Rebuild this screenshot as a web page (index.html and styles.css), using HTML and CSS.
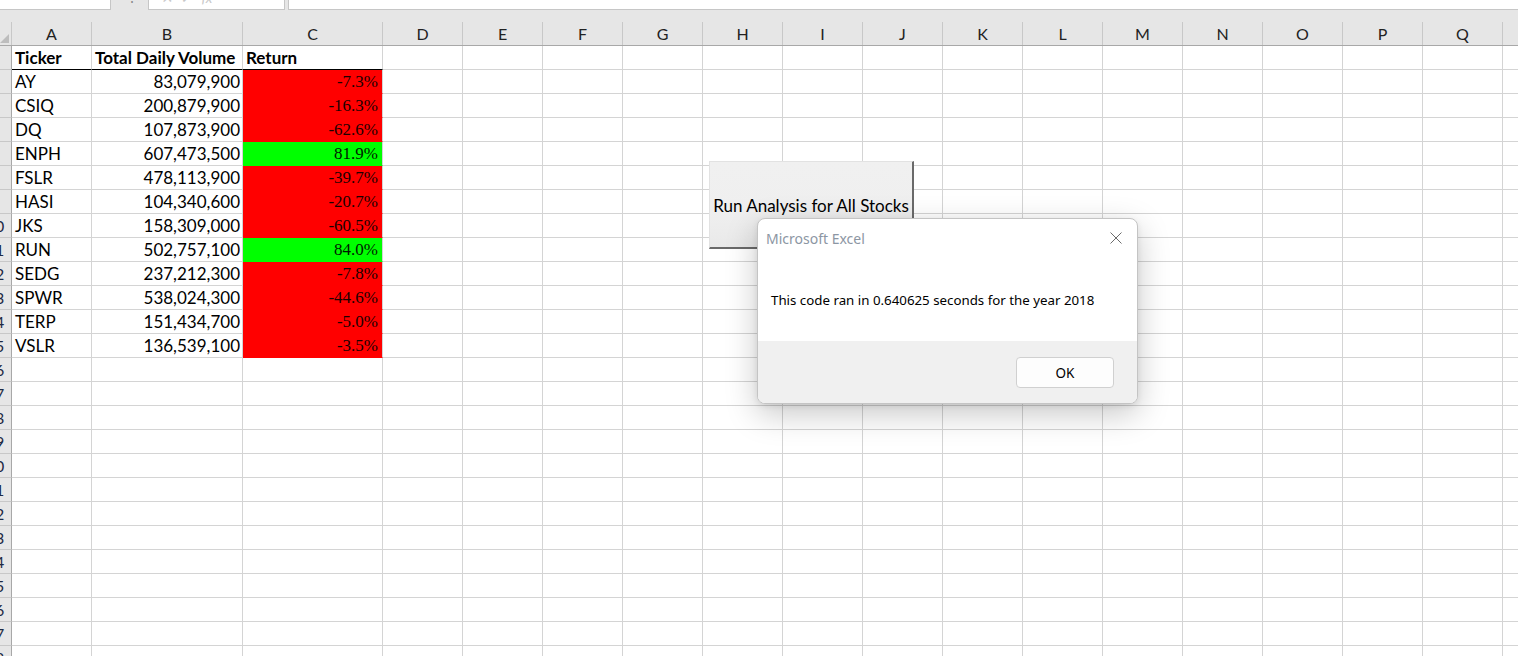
FILE: index.html
```html
<!DOCTYPE html>
<html>
<head>
<meta charset="utf-8">
<link rel="stylesheet" href="styles.css">
</head>
<body>
<div class="app">
  <div class="formula-bar">
    <div class="namebox"></div>
    <div class="fb-gap"><span class="fb-dots">⋮</span></div>
    <div class="fx-box"><span class="fx-glyphs">✕ &nbsp;✓ &nbsp;&nbsp;fx</span></div>
    <div class="fb-spacer"></div>
    <div class="formula-input"></div>
  </div>
  <div class="hdr-gap"></div>
  <div class="col-headers">
    <div class="corner"><div class="tri"></div></div>
    <div class="ch w-a">A</div>
    <div class="ch w-b">B</div>
    <div class="ch w-c">C</div>
    <div class="ch">D</div><div class="ch">E</div><div class="ch">F</div><div class="ch">G</div>
    <div class="ch">H</div><div class="ch">I</div><div class="ch">J</div><div class="ch">K</div>
    <div class="ch">L</div><div class="ch">M</div><div class="ch">N</div><div class="ch">O</div>
    <div class="ch">P</div><div class="ch">Q</div><div class="ch ch-last"></div>
  </div>
  <div class="sheet">
    <div class="row"><div class="rh"><span>3</span></div><div class="c w-a b hb">Ticker</div><div class="c w-b b hb">Total Daily Volume</div><div class="c w-c b hb">Return</div><div class="rest"></div></div>
    <div class="row"><div class="rh"><span>4</span></div><div class="c w-a">AY</div><div class="c w-b num">83,079,900</div><div class="c w-c ret red">-7.3%</div><div class="rest"></div></div>
    <div class="row"><div class="rh"><span>5</span></div><div class="c w-a">CSIQ</div><div class="c w-b num">200,879,900</div><div class="c w-c ret red">-16.3%</div><div class="rest"></div></div>
    <div class="row"><div class="rh"><span>6</span></div><div class="c w-a">DQ</div><div class="c w-b num">107,873,900</div><div class="c w-c ret red">-62.6%</div><div class="rest"></div></div>
    <div class="row"><div class="rh"><span>7</span></div><div class="c w-a">ENPH</div><div class="c w-b num">607,473,500</div><div class="c w-c ret green">81.9%</div><div class="rest"></div></div>
    <div class="row"><div class="rh"><span>8</span></div><div class="c w-a">FSLR</div><div class="c w-b num">478,113,900</div><div class="c w-c ret red">-39.7%</div><div class="rest"></div></div>
    <div class="row"><div class="rh"><span>9</span></div><div class="c w-a">HASI</div><div class="c w-b num">104,340,600</div><div class="c w-c ret red">-20.7%</div><div class="rest"></div></div>
    <div class="row"><div class="rh"><span>10</span></div><div class="c w-a">JKS</div><div class="c w-b num">158,309,000</div><div class="c w-c ret red">-60.5%</div><div class="rest"></div></div>
    <div class="row"><div class="rh"><span>11</span></div><div class="c w-a">RUN</div><div class="c w-b num">502,757,100</div><div class="c w-c ret green">84.0%</div><div class="rest"></div></div>
    <div class="row"><div class="rh"><span>12</span></div><div class="c w-a">SEDG</div><div class="c w-b num">237,212,300</div><div class="c w-c ret red">-7.8%</div><div class="rest"></div></div>
    <div class="row"><div class="rh"><span>13</span></div><div class="c w-a">SPWR</div><div class="c w-b num">538,024,300</div><div class="c w-c ret red">-44.6%</div><div class="rest"></div></div>
    <div class="row"><div class="rh"><span>14</span></div><div class="c w-a">TERP</div><div class="c w-b num">151,434,700</div><div class="c w-c ret red">-5.0%</div><div class="rest"></div></div>
    <div class="row"><div class="rh"><span>15</span></div><div class="c w-a">VSLR</div><div class="c w-b num">136,539,100</div><div class="c w-c ret red">-3.5%</div><div class="rest"></div></div>
    <div class="row"><div class="rh"><span>16</span></div><div class="c w-a"></div><div class="c w-b"></div><div class="c w-c"></div><div class="rest"></div></div>
    <div class="row"><div class="rh"><span>17</span></div><div class="c w-a"></div><div class="c w-b"></div><div class="c w-c"></div><div class="rest"></div></div>
    <div class="row"><div class="rh"><span>18</span></div><div class="c w-a"></div><div class="c w-b"></div><div class="c w-c"></div><div class="rest"></div></div>
    <div class="row"><div class="rh"><span>19</span></div><div class="c w-a"></div><div class="c w-b"></div><div class="c w-c"></div><div class="rest"></div></div>
    <div class="row"><div class="rh"><span>20</span></div><div class="c w-a"></div><div class="c w-b"></div><div class="c w-c"></div><div class="rest"></div></div>
    <div class="row"><div class="rh"><span>21</span></div><div class="c w-a"></div><div class="c w-b"></div><div class="c w-c"></div><div class="rest"></div></div>
    <div class="row"><div class="rh"><span>22</span></div><div class="c w-a"></div><div class="c w-b"></div><div class="c w-c"></div><div class="rest"></div></div>
    <div class="row"><div class="rh"><span>23</span></div><div class="c w-a"></div><div class="c w-b"></div><div class="c w-c"></div><div class="rest"></div></div>
    <div class="row"><div class="rh"><span>24</span></div><div class="c w-a"></div><div class="c w-b"></div><div class="c w-c"></div><div class="rest"></div></div>
    <div class="row"><div class="rh"><span>25</span></div><div class="c w-a"></div><div class="c w-b"></div><div class="c w-c"></div><div class="rest"></div></div>
    <div class="row"><div class="rh"><span>26</span></div><div class="c w-a"></div><div class="c w-b"></div><div class="c w-c"></div><div class="rest"></div></div>
    <div class="row"><div class="rh"><span>27</span></div><div class="c w-a"></div><div class="c w-b"></div><div class="c w-c"></div><div class="rest"></div></div>
    <div class="row"><div class="rh"><span>28</span></div><div class="c w-a"></div><div class="c w-b"></div><div class="c w-c"></div><div class="rest"></div></div>
  </div>

  <div class="macro-btn">Run Analysis for All Stocks</div>

  <div class="dialog">
    <div class="dlg-title">
      <span class="dlg-name">Microsoft Excel</span>
      <svg class="dlg-close" width="12" height="12" viewBox="0 0 12 12"><path d="M0.5 0.5 L11.5 11.5 M11.5 0.5 L0.5 11.5" stroke="#6b6b6b" stroke-width="1" fill="none"/></svg>
    </div>
    <div class="dlg-body">This code ran in 0.640625 seconds for the year 2018</div>
    <div class="dlg-footer"><div class="ok-btn">OK</div></div>
  </div>
</div>
</body>
</html>
```

FILE: styles.css
```css
* { box-sizing: border-box; }
html, body { margin: 0; padding: 0; }
body {
  width: 1518px;
  height: 656px;
  overflow: hidden;
  background: #ffffff;
  font-family: Lato, "Liberation Sans", sans-serif;
  color: #000;
}
.app {
  position: relative;
  width: 1518px;
  height: 656px;
  overflow: hidden;
  background: #e6e6e6;
}

/* formula bar strip */
.formula-bar {
  display: flex;
  height: 10px;
  background: #e6e6e6;
}
.namebox {
  width: 111px;
  height: 10px;
  background: #fff;
  border-right: 1px solid #c6c6c6;
  border-bottom: 1px solid #c6c6c6;
}
.fb-gap {
  width: 37px;
  position: relative;
  overflow: hidden;
}
.fb-dots {
  position: absolute;
  left: 14px;
  top: -12px;
  font-size: 14px;
  color: #8a8a8a;
}
.fx-box {
  width: 137px;
  height: 10px;
  background: #fff;
  border: 1px solid #c6c6c6;
  border-top: none;
  overflow: hidden;
  position: relative;
}
.fx-glyphs {
  position: absolute;
  left: 12px;
  top: -11px;
  font-size: 14px;
  color: #c8c8c8;
  white-space: nowrap;
  font-style: italic;
}
.fb-spacer { width: 3px; }
.formula-input {
  flex: 1;
  height: 10px;
  background: #fff;
  border-left: 1px solid #c6c6c6;
  border-bottom: 1px solid #c6c6c6;
}
.hdr-gap { height: 12px; }

/* column headers */
.col-headers {
  display: flex;
  height: 24px;
  border-bottom: 1px solid #a8a8a8;
  background: #e6e6e6;
}
.corner {
  width: 12px;
  flex: none;
  position: relative;
  border-right: 1px solid #c8c8c8;
}
.tri {
  position: absolute;
  left: 0;
  bottom: 2px;
  width: 0;
  height: 0;
  border-left: 9px solid transparent;
  border-bottom: 9px solid #bdbdbd;
}
.ch {
  width: 80px;
  flex: none;
  border-right: 1px solid #c8c8c8;
  text-align: center;
  font-size: 16px;
  line-height: 23px;
  color: #222;
}
.ch.w-a { width: 80px; }
.ch.w-b { width: 151px; }
.ch.w-c { width: 140px; }
.ch-last { flex: 1; border-right: none; }

/* sheet */
.sheet {
  background: #fff;
}
.row {
  display: flex;
  height: 24px;
}
.rh {
  width: 12px;
  flex: none;
  background: #e6e6e6;
  border-right: 1px solid #a8a8a8;
  border-bottom: 1px solid #c8c8c8;
  overflow: hidden;
  position: relative;
}
.rh span {
  display: block;
  width: 30px;
  margin-left: -20px;
  text-align: center;
  font-size: 16px;
  line-height: 23px;
  color: #1f2a44;
}
.c {
  flex: none;
  height: 24px;
  border-right: 1px solid #d4d4d4;
  border-bottom: 1px solid #d4d4d4;
  font-size: 17px;
  line-height: 24px;
  padding: 0 3px;
  white-space: nowrap;
  overflow: hidden;
}
.w-a { width: 80px; }
.w-b { width: 151px; }
.w-c { width: 140px; }
.b { font-weight: 700; }
.hb { border-bottom: 1px solid #000; }
.num { text-align: right; padding-right: 2px; }
.ret {
  text-align: right;
  padding-right: 4px;
  font-family: "Liberation Serif", serif;
  font-size: 17px;
  color: #1a0000;
}
.red { background: #ff0000; border-bottom-color: #ff0000; }
.green { background: #00ff00; border-bottom-color: #00ff00; color: #001a00; }
.rest {
  flex: 1;
  height: 24px;
  border-bottom: 1px solid #d4d4d4;
  background: repeating-linear-gradient(to right, transparent 0 79px, #d4d4d4 79px 80px);
}

/* macro button (shape on canvas) */
.macro-btn {
  position: absolute;
  left: 709px;
  top: 161px;
  width: 205px;
  height: 88px;
  background: linear-gradient(to bottom, #f0f0f0 0%, #efefef 60%, #e9e9e9 100%);
  border-top: 1px solid #e2e2e2;
  border-left: 1px solid #e2e2e2;
  border-right: 2px solid #6a6a6a;
  border-bottom: 2px solid #6a6a6a;
  display: flex;
  align-items: center;
  justify-content: center;
  padding-top: 2px;
  font-size: 17px;
  color: #000;
  white-space: nowrap;
}

/* dialog */
.dialog {
  position: absolute;
  left: 757px;
  top: 218px;
  width: 381px;
  height: 186px;
  background: #fff;
  border: 1px solid #c4c4c4;
  border-radius: 8px;
  box-shadow: 0 10px 32px rgba(0, 0, 0, 0.22), 0 2px 6px rgba(0, 0, 0, 0.08);
  display: flex;
  flex-direction: column;
  overflow: hidden;
  font-family: "Noto Sans", "Open Sans", sans-serif;
}
.dlg-title {
  height: 40px;
  display: flex;
  align-items: center;
  justify-content: space-between;
  padding: 0 15px 2px 8px;
}
.dlg-name {
  font-size: 14px;
  color: #8c96a3;
}
.dlg-close { display: block; }
.dlg-body {
  flex: 1;
  display: flex;
  align-items: center;
  padding: 0 0 0 13px;
  font-size: 13.3px;
  color: #000;
}
.dlg-footer {
  height: 62px;
  background: #f0f0f0;
  display: flex;
  justify-content: flex-end;
  align-items: flex-start;
  padding: 16px 23px 0 0;
}
.ok-btn {
  width: 98px;
  height: 31px;
  background: #fdfdfd;
  border: 1px solid #d0d0d0;
  border-radius: 4px;
  display: flex;
  align-items: center;
  justify-content: center;
  font-size: 13.5px;
  color: #000;
}
```
